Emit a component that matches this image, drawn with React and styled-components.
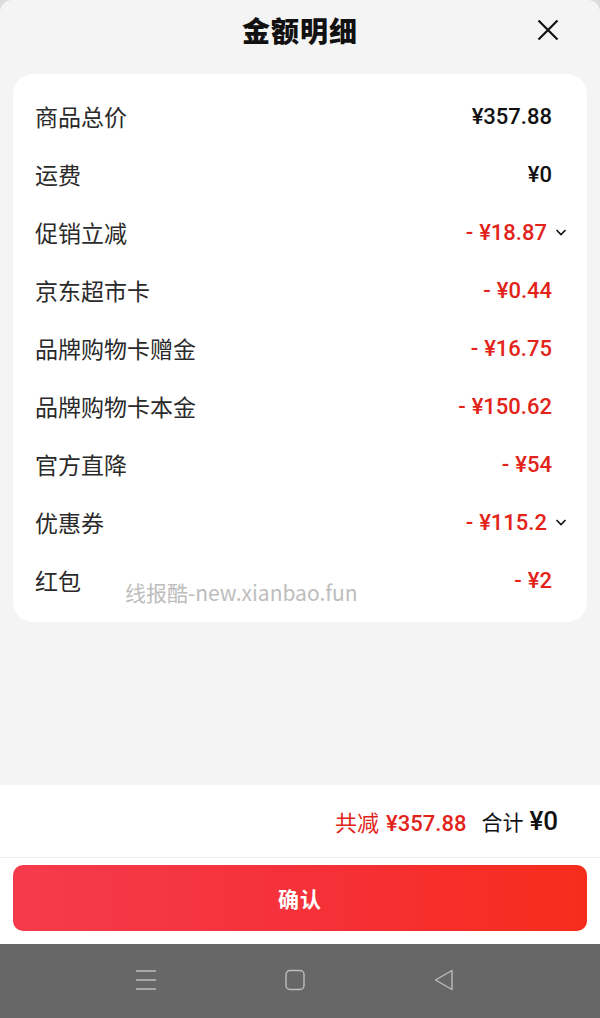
import React from 'react';
import styled, { createGlobalStyle } from 'styled-components';

const GlobalStyle = createGlobalStyle`
	html, body {
		margin: 0;
		padding: 0;
		background: #dcdcdc;
	}
	* {
		box-sizing: border-box;
	}
`;

const CJK = `"Noto Sans CJK SC", "Noto Sans", sans-serif`;
const NUM = `Roboto, "Noto Sans CJK SC", sans-serif`;
const RED = '#e2231a';

const Screen = styled.div`
	width: 600px;
	height: 1018px;
	display: flex;
	flex-direction: column;
	font-family: ${CJK};
`;

const Sheet = styled.div`
	flex: 1;
	display: flex;
	flex-direction: column;
	background: #f4f4f4;
	border-radius: 12px 12px 0 0;
	overflow: hidden;
`;

const Header = styled.div`
	height: 60px;
	display: flex;
	align-items: center;
	justify-content: center;
	position: relative;
`;

const Title = styled.h1`
	margin: 0;
	font-size: 28px;
	font-weight: 900;
	color: #111;
	letter-spacing: 1px;
`;

const Close = styled.button`
	position: absolute;
	right: 41px;
	top: 19px;
	width: 22px;
	height: 22px;
	padding: 0;
	border: none;
	background: none;
	display: flex;
`;

const Card = styled.div`
	position: relative;
	margin: 14px 13px 0;
	padding: 13px 0;
	background: #fff;
	border-radius: 20px;
`;

const Row = styled.div`
	height: 58px;
	display: flex;
	align-items: center;
	justify-content: space-between;
	padding: 0 35px 0 22px;
`;

const Label = styled.span`
	font-size: 23px;
	color: #2a2a2a;
`;

const Value = styled.span`
	display: flex;
	align-items: center;
	font-family: ${NUM};
	font-size: 22px;
	font-weight: 500;
	color: ${p => (p.$minus ? RED : '#111')};
`;

const Minus = styled.span`
	margin-right: 6px;
`;

const Chevron = styled.svg`
	width: 12px;
	height: 12px;
	margin-left: 8px;
	margin-right: -15px;
`;

const Watermark = styled.div`
	position: absolute;
	left: 112px;
	bottom: 15px;
	font-size: 21px;
	color: #bdbdbd;
	font-family: ${CJK};
	pointer-events: none;
`;

const Filler = styled.div`
	flex: 1;
`;

const Summary = styled.div`
	height: 73px;
	background: #fff;
	display: flex;
	align-items: center;
	justify-content: flex-end;
	padding-right: 42px;
	border-bottom: 1px solid #eee;
	gap: 15px;
`;

const Saved = styled.span`
	color: ${RED};
	font-size: 22px;
	b {
		font-family: ${NUM};
		font-size: 22px;
		font-weight: 500;
		margin-left: 7px;
	}
`;

const Total = styled.span`
	color: #111;
	font-size: 21px;
	b {
		font-family: ${NUM};
		font-size: 26px;
		font-weight: 500;
		margin-left: 6px;
	}
`;

const ButtonBar = styled.div`
	height: 86px;
	background: #fff;
	padding: 7px 13px 13px;
`;

const Confirm = styled.button`
	width: 100%;
	height: 66px;
	border: none;
	border-radius: 10px;
	background: linear-gradient(90deg, #f53b4c 0%, #f5313a 50%, #f72c1c 100%);
	color: #fff;
	font-family: ${CJK};
	font-size: 21px;
	font-weight: 700;
	letter-spacing: 1px;
`;

const NavBar = styled.div`
	height: 74px;
	background: #676767;
	display: flex;
	align-items: center;
	justify-content: center;
	gap: 127px;
	padding: 0 10px 2px 0;
`;

const NavIcon = styled.svg`
	width: 22px;
	height: 22px;
`;

const items = [
	{ label: '商品总价', value: '¥357.88' },
	{ label: '运费', value: '¥0' },
	{ label: '促销立减', value: '¥18.87', minus: true, more: true },
	{ label: '京东超市卡', value: '¥0.44', minus: true },
	{ label: '品牌购物卡赠金', value: '¥16.75', minus: true },
	{ label: '品牌购物卡本金', value: '¥150.62', minus: true },
	{ label: '官方直降', value: '¥54', minus: true },
	{ label: '优惠券', value: '¥115.2', minus: true, more: true },
	{ label: '红包', value: '¥2', minus: true },
];

export default function App() {
	return (
		<Screen>
			<GlobalStyle />
			<Sheet>
				<Header>
					<Title>金额明细</Title>
					<Close aria-label="close">
						<svg viewBox="0 0 22 22" width="22" height="22">
							<path d="M1.5 1.5 L20.5 20.5 M20.5 1.5 L1.5 20.5" stroke="#111" strokeWidth="2.2" fill="none" />
						</svg>
					</Close>
				</Header>
				<Card>
					{items.map(item => (
						<Row key={item.label}>
							<Label>{item.label}</Label>
							<Value $minus={item.minus}>
								{item.minus ? <Minus>-</Minus> : null}
								{item.value}
								{item.more ? (
									<Chevron viewBox="0 0 12 12">
										<path d="M1.5 4 L6 8.5 L10.5 4" stroke="#111" strokeWidth="1.6" fill="none" />
									</Chevron>
								) : null}
							</Value>
						</Row>
					))}
					<Watermark>线报酷-new.xianbao.fun</Watermark>
				</Card>
				<Filler />
			</Sheet>
			<Summary>
				<Saved>共减<b>¥357.88</b></Saved>
				<Total>合计<b>¥0</b></Total>
			</Summary>
			<ButtonBar>
				<Confirm>确认</Confirm>
			</ButtonBar>
			<NavBar>
				<NavIcon viewBox="0 0 22 22">
					<path d="M1 2 H21 M1 11 H21 M1 20 H21" stroke="#bdbdbd" strokeWidth="1.4" fill="none" />
				</NavIcon>
				<NavIcon viewBox="0 0 22 22">
					<rect x="2" y="1.5" width="18" height="19" rx="4" stroke="#bdbdbd" strokeWidth="1.4" fill="none" />
				</NavIcon>
				<NavIcon viewBox="0 0 22 22">
					<path d="M19 1.5 L2.5 11 L19 20.5 Z" stroke="#bdbdbd" strokeWidth="1.4" strokeLinejoin="round" fill="none" />
				</NavIcon>
			</NavBar>
		</Screen>
	);
}
